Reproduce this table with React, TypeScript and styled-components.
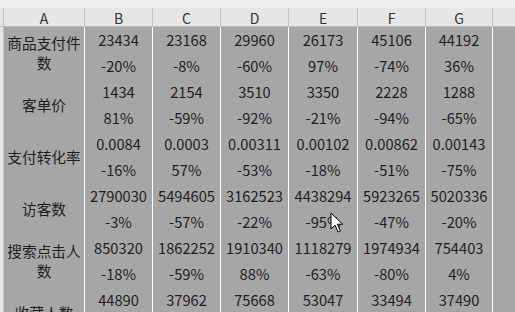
import React from "react";
import styled, { createGlobalStyle } from "styled-components";

const Global = createGlobalStyle`
  html, body { margin: 0; padding: 0; background: #a6a6a6; overflow: hidden; }
  body { font-family: "Noto Sans CJK SC", "Noto Sans", sans-serif; }
`;

const COLS = "4px 81px 68px 68px 68px 69px 68px 67px 1fr";

const Sheet = styled.div`
  width: 515px;
  height: 312px;
  display: flex;
  flex-direction: column;
  overflow: hidden;
  position: relative;
  background: #a6a6a6;
`;

const TopStrip = styled.div`
  height: 8px;
  background: #efefef;
  flex: none;
`;

const HeaderRow = styled.div`
  display: grid;
  grid-template-columns: ${COLS};
  height: 19px;
  flex: none;
  background: #e6e6e6;
`;

const HeadCell = styled.div<{ $last?: boolean }>`
  box-sizing: border-box;
  border-right: ${(p) => (p.$last ? "none" : "1px solid #c4c4c4")};
  border-bottom: 1px solid #bdbdbd;
  display: flex;
  align-items: center;
  justify-content: center;
  font-family: "Noto Sans CJK SC", "Noto Sans", sans-serif;
  font-size: 14px;
  color: #333;
  line-height: 1;
  padding-top: 2px;
`;

const Row = styled.div`
  display: grid;
  grid-template-columns: ${COLS};
  height: 52px;
  flex: none;
`;

const RowHead = styled.div`
  box-sizing: border-box;
  background: #e6e6e6;
  border-right: 1px solid #c4c4c4;
  border-bottom: 1px solid #bdbdbd;
`;

const Label = styled.div`
  box-sizing: border-box;
  background: #a6a6a6;
  border-right: 1px solid #ffffff;
  border-bottom: 1px solid #ffffff;
  display: flex;
  align-items: center;
  justify-content: center;
  text-align: center;
  padding: 0 1px;
  font-size: 14.67px;
  line-height: 20px;
  color: #1e1e1e;
`;

const Cell = styled.div`
  box-sizing: border-box;
  background: #a6a6a6;
  border-right: 1px solid #ffffff;
  border-bottom: 1px solid #ffffff;
  display: flex;
  flex-direction: column;
  align-items: center;
  font-size: 14.67px;
  color: #1e1e1e;
`;

const Line = styled.div`
  height: 26px;
  line-height: 26px;
  white-space: nowrap;
`;

const Filler = styled.div`
  background: #a6a6a6;
`;

const Cursor = styled.svg`
  position: absolute;
  left: 330px;
  top: 212px;
`;

type R = { label: string; vals: string[]; pcts: string[] };

const rows: R[] = [
  {
    label: "商品支付件数",
    vals: ["23434", "23168", "29960", "26173", "45106", "44192"],
    pcts: ["-20%", "-8%", "-60%", "97%", "-74%", "36%"],
  },
  {
    label: "客单价",
    vals: ["1434", "2154", "3510", "3350", "2228", "1288"],
    pcts: ["81%", "-59%", "-92%", "-21%", "-94%", "-65%"],
  },
  {
    label: "支付转化率",
    vals: ["0.0084", "0.0003", "0.00311", "0.00102", "0.00862", "0.00143"],
    pcts: ["-16%", "57%", "-53%", "-18%", "-51%", "-75%"],
  },
  {
    label: "访客数",
    vals: ["2790030", "5494605", "3162523", "4438294", "5923265", "5020336"],
    pcts: ["-3%", "-57%", "-22%", "-95%", "-47%", "-20%"],
  },
  {
    label: "搜索点击人数",
    vals: ["850320", "1862252", "1910340", "1118279", "1974934", "754403"],
    pcts: ["-18%", "-59%", "88%", "-63%", "-80%", "4%"],
  },
  {
    label: "收藏人数",
    vals: ["44890", "37962", "75668", "53047", "33494", "37490"],
    pcts: ["-12%", "-31%", "-40%", "-9%", "-66%", "-25%"],
  },
];

const letters = ["A", "B", "C", "D", "E", "F", "G"];

export default function App() {
  return (
    <>
      <Global />
      <Sheet>
        <TopStrip />
        <HeaderRow>
          <HeadCell />
          {letters.map((l) => (
            <HeadCell key={l}>{l}</HeadCell>
          ))}
          <HeadCell $last />
        </HeaderRow>
        {rows.map((r) => (
          <Row key={r.label}>
            <RowHead />
            <Label>{r.label}</Label>
            {r.vals.map((v, i) => (
              <Cell key={i}>
                <Line>{v}</Line>
                <Line>{r.pcts[i]}</Line>
              </Cell>
            ))}
            <Filler />
          </Row>
        ))}
        <Cursor width="14" height="22" viewBox="0 0 14 22">
          <path
            d="M1 1 L1 17 L5 13.2 L8 20 L10.4 19 L7.5 12.2 L12.6 12.2 Z"
            fill="#ffffff"
            stroke="#000000"
            strokeWidth="1"
            strokeLinejoin="miter"
          />
        </Cursor>
      </Sheet>
    </>
  );
}
